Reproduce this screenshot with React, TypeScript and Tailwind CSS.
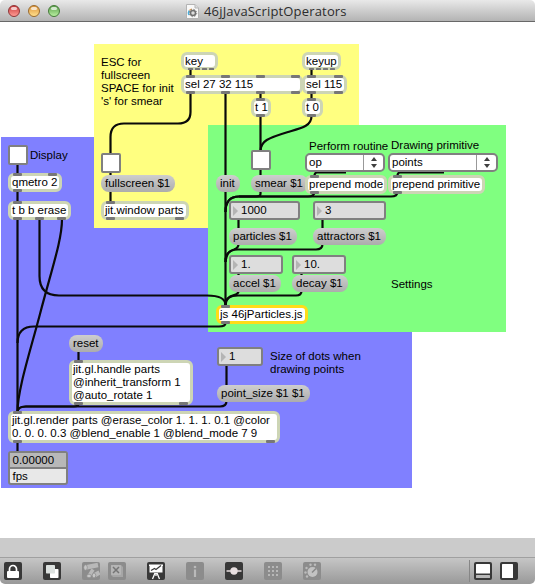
import React from "react";

type Kids = { children?: React.ReactNode };
type Placed = Kids & { at: string };

function Obj({ at, children, tone = "border-[#cdd5b5]" }: Placed & { tone?: string }) {
  return (
    <div className={`absolute flex items-center whitespace-pre rounded-[6px] border-[3px] bg-white pl-[1px] ${tone} ${at}`}>
      {children}
    </div>
  );
}

function Msg({ at, children }: Placed) {
  return (
    <div className={`absolute flex h-[17px] items-center whitespace-pre rounded-[8px] bg-linear-to-b from-[#cecece] to-[#acacac] pl-[4px] ${at}`}>
      {children}
    </div>
  );
}

function Num({ at, children }: Placed) {
  return (
    <div className={`absolute flex h-[19px] items-center gap-[3px] rounded-[3px] border-2 border-[#808080] bg-[#dddddd] pl-[2px] ${at}`}>
      <svg width="5" height="10" viewBox="0 0 5 10">
        <path d="M0 0L5 5L0 10Z" fill="#b4b4b4" />
      </svg>
      {children}
    </div>
  );
}

function Menu({ at, children }: Placed) {
  return (
    <div className={`absolute flex h-[19px] items-center rounded-[5px] border-2 border-[#808080] bg-white pl-[2px] ${at}`}>
      <span className="flex-1">{children}</span>
      <span className="flex h-full w-[20px] items-center justify-center border-l border-[#999999]">
        <svg width="6" height="11" viewBox="0 0 6 11">
          <path d="M0 4L3 0L6 4ZM0 7L3 11L6 7Z" fill="#404040" />
        </svg>
      </span>
    </div>
  );
}

function Toggle({ at }: { at: string }) {
  return <div className={`absolute h-[20px] w-[20px] rounded-[2px] border-2 border-[#808080] bg-white ${at}`} />;
}

function Note({ at, children }: Placed) {
  return <div className={`absolute whitespace-pre ${at}`}>{children}</div>;
}

const cords = [
  "M190.5 69V76",
  "M190.5 93V112Q190.5 123.5 178 123.5H124Q110.5 123.5 110.5 137V154",
  "M225.5 93V306",
  "M260.5 93V99M260.5 116V151",
  "M311.5 69V76M311.5 93V99",
  "M311.5 116C311.5 126 302 128 288 132C268 138 260.5 141 260.5 151",
  "M17.5 164V174M17.5 191V202M17.5 219V412",
  "M39.5 219V276Q39.5 295.5 59 295.5H207Q225.5 295.5 225.5 305",
  "M62 219C62 240 52 268 40 314C30 352 17.5 390 17.5 412",
  "M110.5 172V176M110.5 191V202",
  "M260.5 169V176",
  "M260.5 191V194Q260.5 196.5 256 196.5H239Q225.5 196.5 225.5 212",
  "M346 172.5H317Q314.5 172.5 314.5 176",
  "M444 172.5H400Q397.5 172.5 397.5 176",
  "M314.5 192Q314.5 196.5 308 196.5H239",
  "M397.5 192Q397.5 196.5 391 196.5H239Q225.5 196.5 225.5 212",
  "M238.5 219V229M322.5 219V229",
  "M238.5 244Q238.5 248 234 249.5Q225.5 252 225.5 262",
  "M322.5 244Q322.5 249.5 316 249.5H238Q225.5 249.5 225.5 262",
  "M238.5 273V276M301.5 273V276",
  "M238.5 291Q238.5 294 234 295Q225.5 297 225.5 305",
  "M301.5 291Q301.5 295.5 296 295.5H238Q225.5 295.5 225.5 305",
  "M225.5 323Q225.5 326.5 219 326.5H34Q17.5 326.5 17.5 343",
  "M78.5 351V361",
  "M78.5 404Q78.5 406.5 74 406.5H26Q17.5 406.5 17.5 412",
  "M226.5 365V386M226.5 401Q226.5 406.5 220 406.5H26Q17.5 406.5 17.5 412",
  "M17.5 442V452",
];

// Inlets and outlets as [x, y] of each tab's top left corner.
const ports: [number, number][] = [
  [186, 75], [221, 75], [256, 75], [291, 75],
  [186, 91], [221, 91], [256, 91], [291, 91],
  [307, 75], [334, 75], [307, 91], [334, 91],
  [256, 98], [256, 114], [307, 98], [307, 114],
  [13, 173], [48, 173], [13, 189],
  [13, 201], [13, 217], [35, 217], [57, 217],
  [106, 201], [106, 217], [175, 217],
  [310, 175], [310, 191], [393, 175], [393, 191],
  [221, 305], [221, 321],
  [74, 360], [74, 402], [179, 402],
  [13, 411], [13, 440], [266, 440],
];

const keyTabs: [number, number][] = [
  [188, 68], [195, 68], [202, 68], [209, 68],
  [309, 68], [316, 68], [323, 68], [330, 68],
];

function Patch() {
  return (
    <div className="absolute -top-[22px] left-0 h-[584px] w-[535px] font-['Liberation_Sans',Arial,sans-serif] text-[11.5px] leading-[13px] text-black">
      <div className="absolute left-[1px] top-[137px] h-[351px] w-[411px] bg-[#8080ff]" />
      <div className="absolute left-[94px] top-[44px] h-[184px] w-[265px] bg-[#ffff80]" />
      <div className="absolute left-[208px] top-[125px] h-[207px] w-[298px] bg-[#80ff80]" />

      <svg className="absolute left-0 top-0" width="535" height="584" fill="none" stroke="#0a0a0a" strokeWidth="2.2">
        {cords.map((d) => (
          <path key={d} d={d} />
        ))}
      </svg>

      <Note at="left-[101px] top-[56px]">{"ESC for\nfullscreen\nSPACE for init\n's' for smear"}</Note>
      <Note at="left-[30px] top-[149px]">Display</Note>
      <Note at="left-[309px] top-[140px]">Perform routine</Note>
      <Note at="left-[391px] top-[139px]">Drawing primitive</Note>
      <Note at="left-[391px] top-[278px]">Settings</Note>
      <Note at="left-[270px] top-[350px]">{"Size of dots when\ndrawing points"}</Note>

      <Obj at="left-[181px] top-[52px] h-[18px] w-[37px]">key</Obj>
      <Obj at="left-[302px] top-[52px] h-[18px] w-[39px]">keyup</Obj>
      <Obj at="left-[181px] top-[75px] h-[19px] w-[122px]">sel 27 32 115</Obj>
      <Obj at="left-[302px] top-[75px] h-[19px] w-[45px]">sel 115</Obj>
      <Obj at="left-[251px] top-[98px] h-[19px] w-[20px]">t 1</Obj>
      <Obj at="left-[302px] top-[98px] h-[19px] w-[21px]">t 0</Obj>

      <Toggle at="left-[8px] top-[145px]" />
      <Obj at="left-[8px] top-[173px] h-[19px] w-[54px]">qmetro 2</Obj>
      <Obj at="left-[8px] top-[201px] h-[19px] w-[63px]">t b b erase</Obj>

      <Toggle at="left-[101px] top-[153px]" />
      <Msg at="left-[101px] top-[175px] w-[74px]">fullscreen $1</Msg>
      <Obj at="left-[101px] top-[201px] h-[19px] w-[88px]">jit.window parts</Obj>

      <Toggle at="left-[251px] top-[150px]" />
      <Msg at="left-[216px] top-[175px] w-[24px]">init</Msg>
      <Msg at="left-[251px] top-[175px] w-[57px]">smear $1</Msg>
      <Menu at="left-[305px] top-[153px] w-[80px]">op</Menu>
      <Menu at="left-[388px] top-[153px] w-[110px]">points</Menu>
      <Obj at="left-[305px] top-[175px] h-[19px] w-[82px]">prepend mode</Obj>
      <Obj at="left-[388px] top-[175px] h-[19px] w-[97px]">prepend primitive</Obj>

      <Num at="left-[229px] top-[201px] w-[71px]">1000</Num>
      <Num at="left-[313px] top-[201px] w-[73px]">3</Num>
      <Msg at="left-[229px] top-[228px] w-[68px]">particles $1</Msg>
      <Msg at="left-[313px] top-[228px] w-[73px]">attractors $1</Msg>
      <Num at="left-[229px] top-[255px] w-[54px]">1.</Num>
      <Num at="left-[292px] top-[255px] w-[54px]">10.</Num>
      <Msg at="left-[229px] top-[275px] w-[52px]">accel $1</Msg>
      <Msg at="left-[292px] top-[275px] w-[56px]">decay $1</Msg>
      <Obj at="left-[216px] top-[305px] h-[19px] w-[92px]" tone="border-[#ffdc18]">js 46jParticles.js</Obj>

      <Msg at="left-[69px] top-[335px] w-[34px]">reset</Msg>
      <Obj at="left-[69px] top-[360px] h-[45px] w-[124px]">{"jit.gl.handle parts\n@inherit_transform 1\n@auto_rotate 1"}</Obj>
      <Num at="left-[217px] top-[347px] w-[46px]">1</Num>
      <Msg at="left-[217px] top-[385px] w-[93px]">point_size $1 $1</Msg>
      <Obj at="left-[8px] top-[411px] h-[32px] w-[272px]">{"jit.gl.render parts @erase_color 1. 1. 1. 0.1 @color\n0. 0. 0. 0.3 @blend_enable 1 @blend_mode 7 9"}</Obj>

      <div className="absolute left-[8px] top-[451px] flex h-[34px] w-[60px] flex-col rounded-[3px] border-2 border-[#808080] bg-[#e8e8e8]">
        <div className="flex h-[16px] items-center border-b-2 border-[#808080] bg-[#b8b8b8] pl-[2.5px]">0.00000</div>
        <div className="flex flex-1 items-center pl-[2.5px]">fps</div>
      </div>

      <svg className="absolute left-0 top-0" width="535" height="584" fill="#777777">
        {ports.map(([x, y]) => (
          <rect key={`${x}-${y}`} x={x} y={y} width="9" height="3" rx="1" />
        ))}
        {keyTabs.map(([x, y]) => (
          <rect key={`${x}-${y}`} x={x} y={y} width="5" height="2" rx="0.5" />
        ))}
      </svg>
    </div>
  );
}

function Light({ tone }: { tone: string }) {
  return (
    <span className={`flex h-[12px] w-[12px] justify-center rounded-full border pt-px ${tone}`}>
      <span className="h-[3px] w-[6px] rounded-full bg-white/70" />
    </span>
  );
}

function TitleBar() {
  return (
    <div className="relative flex h-[22px] shrink-0 items-center border-b border-[#686868] bg-linear-to-b from-[#e9e9e9] to-[#b3b3b3] pl-[8px]">
      <div className="flex gap-[8px]">
        <Light tone="border-[#8e3436] bg-linear-to-b from-[#c8383c] to-[#ff9a94]" />
        <Light tone="border-[#9a6a2c] bg-linear-to-b from-[#dc9438] to-[#ffe08c]" />
        <Light tone="border-[#447a38] bg-linear-to-b from-[#5ca04c] to-[#b8f0a0]" />
      </div>
      <div className="ml-[126px] flex items-center gap-[5px]">
        <svg className="mt-[2px]" width="13" height="15" viewBox="0 0 13 15">
          <path d="M.5 .5H9L12.500 4V14.500H.5Z" fill="#f8f8f8" stroke="#b4b4b4" />
          <path d="M9 .5V4H12.500" fill="#dddddd" stroke="#b4b4b4" />
          <path d="M3 11A4 4 0 0 1 3.500 6.500" fill="none" stroke="#4ab0e0" strokeWidth="1.500" />
          <path d="M3.500 6.500A4 4 0 0 1 6 5.200" fill="none" stroke="#e8a050" strokeWidth="1.300" />
          <circle cx="7" cy="9" r="2.500" fill="#dddddd" stroke="#707070" strokeWidth="1.500" />
          <circle cx="7" cy="9" r="3.700" fill="none" stroke="#808080" strokeWidth="1" strokeDasharray="1.400 1.500" />
        </svg>
        <span className="whitespace-nowrap font-['Open_Sans','Noto_Sans',sans-serif] text-[13px] leading-[18px] tracking-[0.17px] text-[#2c2c2c]">
          46jJavaScriptOperators
        </span>
      </div>
    </div>
  );
}

function Tool({ children, off, gap = "ml-[21px]" }: Kids & { off?: boolean; gap?: string }) {
  return (
    <svg className={`shrink-0 ${gap}`} width="18" height="18" viewBox="0 0 18 18">
      <rect width="18" height="18" rx="2" fill={off ? "#8c8c8c" : "#383838"} />
      {children}
    </svg>
  );
}

function ToolBar() {
  return (
    <div className="flex h-[27px] shrink-0 items-center rounded-b-[5px] border-t border-[#a0a0a0] bg-linear-to-b from-[#c6c6c6] to-[#999999] pb-px pt-px">
      <Tool gap="ml-[4px]">
        <rect x="3" y="9" width="12" height="7" rx="1" fill="#fff" />
        <path d="M5.500 9V7A3.500 3.500 0 0 1 12.500 7V9" fill="none" stroke="#fff" strokeWidth="1.700" />
      </Tool>
      <Tool>
        <rect x="7" y="7" width="8.500" height="9" rx=".7" fill="#fff" />
        <rect x="3" y="3" width="9" height="8.500" rx=".7" fill="#dde2e0" />
      </Tool>
      <Tool off>
        <g stroke="#b9b9b9" strokeWidth="4.500">
          <path d="M3.500 5.500L16 3M13 13L17.500 10.500" />
          <path d="M7 14L11 7.500" strokeWidth="3.500" />
        </g>
        <g fill="#c6c6c6" stroke="#8c8c8c" strokeWidth=".7">
          <ellipse cx="3.500" cy="5.500" rx="1.800" ry="2.700" />
          <ellipse cx="7" cy="14" rx="2.300" ry="1.800" />
          <ellipse cx="12" cy="13.500" rx="1.800" ry="2.400" />
        </g>
      </Tool>
      <Tool off gap="ml-[8px]">
        <path d="M3 3H13L15 5V15H5L3 13Z" fill="#a6a6a6" />
        <rect x="3" y="3" width="10" height="10" rx="1" fill="#b5b5b5" />
        <path d="M5 5L11 11M11 5L5 11" stroke="#757575" strokeWidth="1.500" />
      </Tool>
      <Tool>
        <path d="M2 2.500H16V4H15.500V10.500H2.500V4H2Z" fill="#fff" />
        <path d="M4 8.500L7.500 6.500L9 7.500L14 3.500" fill="none" stroke="#383838" strokeWidth="1.200" />
        <path d="M8 11L5.500 17M10 11L12.500 17M9 11V14" stroke="#fff" strokeWidth="1.300" />
      </Tool>
      <Tool off>
        <circle cx="9" cy="5" r="1.300" fill="#bababa" />
        <path d="M9 7.500V15" stroke="#bababa" strokeWidth="2.200" />
      </Tool>
      <Tool>
        <path d="M1.500 9H16.500" stroke="#e8dfe0" strokeWidth="1.500" />
        <circle cx="9" cy="9" r="3.700" fill="#e8dfe0" />
      </Tool>
      <Tool off>
        {[5, 9, 13].map((y) =>
          [5, 9, 13].map((x) => (
            <rect key={`${x}-${y}`} x={x - 1} y={y - 1} width="2" height="2" fill="#b8b8b8" />
          ))
        )}
      </Tool>
      <Tool off>
        <circle cx="9.500" cy="10" r="5" fill="#c2c2c2" />
        <path d="M9 10.500L13 6.500" stroke="#858585" strokeWidth="1.400" />
        <g fill="#bcbcbc">
          <circle cx="4" cy="14.500" r="1.200" />
          <circle cx="2.500" cy="10.500" r="1.200" />
          <circle cx="3.500" cy="6" r="1.200" />
          <circle cx="7.500" cy="2.800" r="1.200" />
          <circle cx="12" cy="2.800" r="1.200" />
        </g>
      </Tool>
      <div className="ml-auto h-[22px] w-px bg-[#868686]" />
      <Tool gap="ml-[4px]">
        <rect x="2" y="2" width="14" height="9.500" rx=".5" fill="#fff" />
        <rect x="2" y="13" width="14" height="3" rx=".5" fill="#b8b8b8" />
      </Tool>
      <Tool gap="ml-[8px] mr-[17px]">
        <rect x="2" y="2" width="11" height="14" rx=".5" fill="#fff" />
      </Tool>
    </div>
  );
}

export default function App() {
  return (
    <div className="flex h-[584px] w-[535px] flex-col overflow-hidden rounded-t-[5px] bg-white">
      <TitleBar />
      <div className="relative h-[516px] shrink-0 bg-white">
        <Patch />
      </div>
      <div className="flex-1 bg-[#cbcbcb]" />
      <ToolBar />
    </div>
  );
}
